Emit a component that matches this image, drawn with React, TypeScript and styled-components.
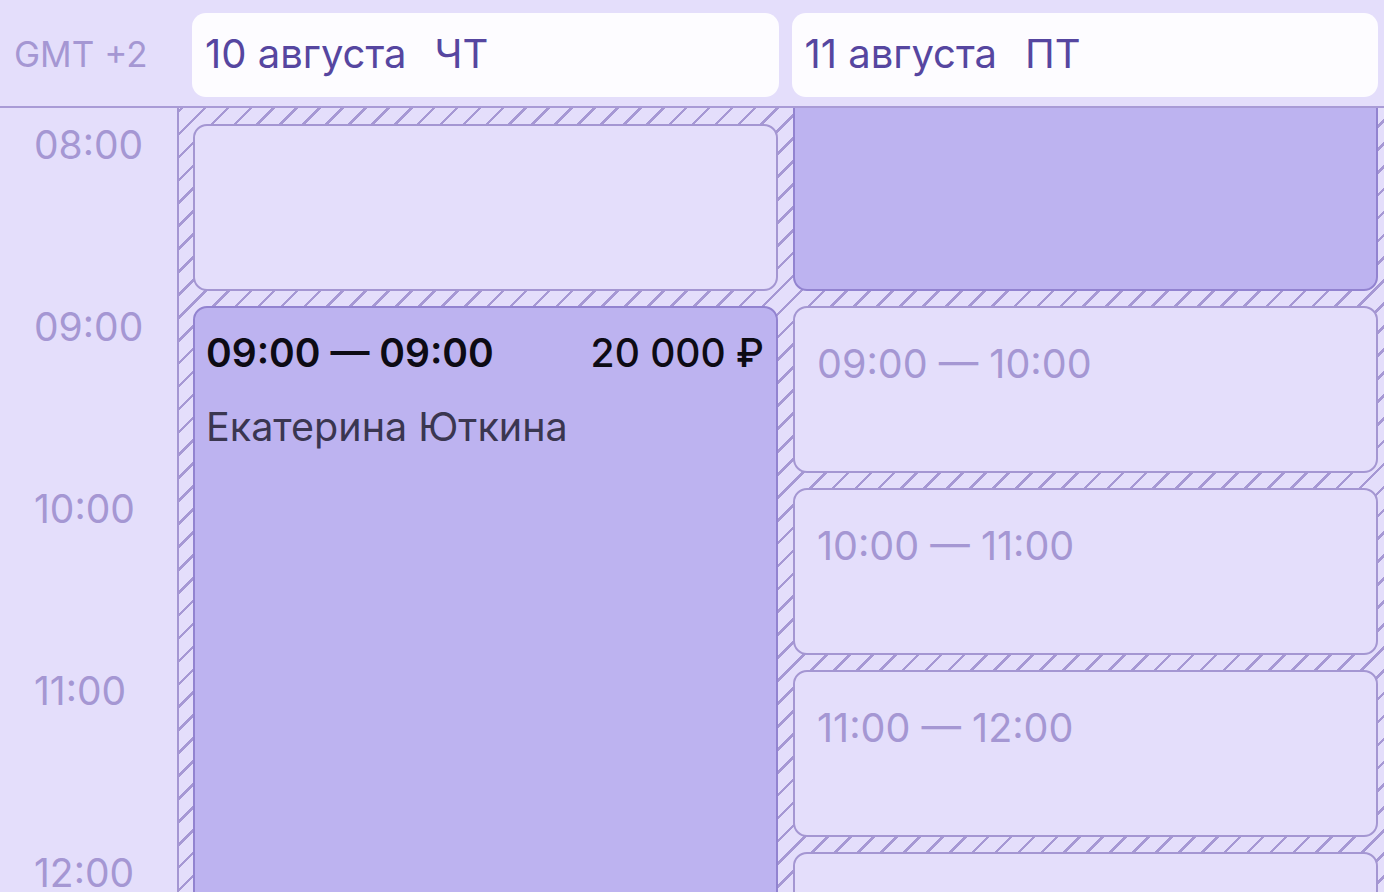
import React from "react";
import styled, { createGlobalStyle } from "styled-components";

const HOUR = 182;
const GAP = 15;

const GlobalStyle = createGlobalStyle`
  html, body {
    margin: 0;
    padding: 0;
    background: #e4defb;
    font-family: Inter, "Noto Sans", sans-serif;
    overflow: hidden;
  }
`;

type Slot =
  | { kind: "free"; label?: string; span?: number }
  | { kind: "booked"; from: string; to: string; price: string; client: string; span: number }
  | { kind: "empty" };

const days: { date: string; weekday: string; slots: Slot[] }[] = [
  {
    date: "10 августа",
    weekday: "ЧТ",
    slots: [
      { kind: "empty" },
      { kind: "free" },
      { kind: "booked", from: "09:00", to: "09:00", price: "20 000 ₽", client: "Екатерина Юткина", span: 5 },
    ],
  },
  {
    date: "11 августа",
    weekday: "ПТ",
    slots: [
      { kind: "booked", from: "07:00", to: "09:00", price: "", client: "", span: 2 },
      { kind: "free", label: "09:00 — 10:00" },
      { kind: "free", label: "10:00 — 11:00" },
      { kind: "free", label: "11:00 — 12:00" },
      { kind: "free", label: "12:00 — 13:00" },
      { kind: "free", label: "13:00 — 14:00" },
    ],
  },
];

const hours = ["07:00", "08:00", "09:00", "10:00", "11:00", "12:00", "13:00"];

const App: React.FC = () => {
  return (
    <Page>
      <GlobalStyle />
      <Header>
        <Timezone>GMT +2</Timezone>
        {days.map((day) => (
          <DayCard key={day.date}>
            {day.date}
            <Weekday>{day.weekday}</Weekday>
          </DayCard>
        ))}
      </Header>
      <Body>
        <Scroller>
          <TimeColumn>
            {hours.map((h) => (
              <TimeLabel key={h}>{h}</TimeLabel>
            ))}
          </TimeColumn>
          <DaysGrid>
            {days.map((day) => (
              <DayColumn key={day.date}>
                {day.slots.map((slot, i) => {
                  if (slot.kind === "empty") return <Spacer key={i} />;
                  if (slot.kind === "free")
                    return (
                      <FreeCard key={i} span={slot.span || 1}>
                        {slot.label}
                      </FreeCard>
                    );
                  return (
                    <BookedCard key={i} span={slot.span}>
                      {slot.client && (
                        <>
                          <BookedTop>
                            <BookedTime>
                              {slot.from} — {slot.to}
                            </BookedTime>
                            <Price>{slot.price}</Price>
                          </BookedTop>
                          <Client>{slot.client}</Client>
                        </>
                      )}
                    </BookedCard>
                  );
                })}
              </DayColumn>
            ))}
          </DaysGrid>
        </Scroller>
      </Body>
    </Page>
  );
};

const Page = styled.div`
  width: 100vw;
  height: 100vh;
  display: flex;
  flex-direction: column;
  background: #e4defb;
`;

const Header = styled.div`
  flex: none;
  display: grid;
  grid-template-columns: 179px 1fr 1fr;
  column-gap: 14px;
  padding: 13px 6px 9px 0;
  box-sizing: border-box;
  border-bottom: 2px solid #a99bd6;
  height: 108px;
  align-items: stretch;
`;

const Timezone = styled.div`
  display: flex;
  align-items: center;
  padding-left: 14px;
  padding-bottom: 3px;
  font-size: 35px;
  color: #a597d3;
`;

const DayCard = styled.div`
  background: #fdfcff;
  border-radius: 14px;
  display: flex;
  align-items: center;
  padding-left: 13px;
  padding-bottom: 4px;
  font-size: 40px;
  color: #5646a0;
  margin-left: -1px;
`;

const Weekday = styled.span`
  margin-left: 28px;
`;

const Body = styled.div`
  flex: 1;
  overflow: hidden;
`;

const Scroller = styled.div`
  display: flex;
  margin-top: -${HOUR}px;
`;

const TimeColumn = styled.div`
  width: 177px;
  flex: none;
  padding-top: 16px;
  display: grid;
  grid-auto-rows: ${HOUR - GAP}px;
  row-gap: ${GAP}px;
`;

const TimeLabel = styled.div`
  padding-left: 34px;
  font-size: 39px;
  line-height: 42px;
  color: #a597d3;
`;

const DaysGrid = styled.div`
  flex: 1;
  display: grid;
  grid-template-columns: 1fr 1fr;
  column-gap: ${GAP}px;
  padding: 16px 6px 0 14px;
  border-left: 2px solid #a496d2;
  background-color: #e4defb;
  background-image: repeating-linear-gradient(
    135deg,
    #a698d4 0px,
    #a698d4 2.6px,
    transparent 2.6px,
    transparent 16.2px
  );
`;

const DayColumn = styled.div`
  display: grid;
  grid-auto-rows: ${HOUR - GAP}px;
  row-gap: ${GAP}px;
`;

const Spacer = styled.div``;

const CardBase = styled.div<{ span: number }>`
  grid-row: span ${(p) => p.span};
  border-radius: 14px;
  box-sizing: border-box;
`;

const FreeCard = styled(CardBase)`
  background: #e4defb;
  border: 2px solid #a496d2;
  padding: 33px 22px 0;
  font-size: 39.5px;
  line-height: 46px;
  color: #a597d3;
`;

const BookedCard = styled(CardBase)`
  background: #bdb3f0;
  border: 2px solid #9283d0;
  padding: 22px 12px 0 11px;
`;

const BookedTop = styled.div`
  display: flex;
  justify-content: space-between;
  align-items: center;
  font-size: 39px;
  line-height: 46px;
  color: #0d0b14;
`;

const BookedTime = styled.span`
  font-weight: 600;
`;

const Price = styled.span`
  font-weight: 500;
`;

const Client = styled.div`
  margin-top: 28px;
  font-size: 39.5px;
  line-height: 46px;
  color: #3a3650;
`;

export default App;
